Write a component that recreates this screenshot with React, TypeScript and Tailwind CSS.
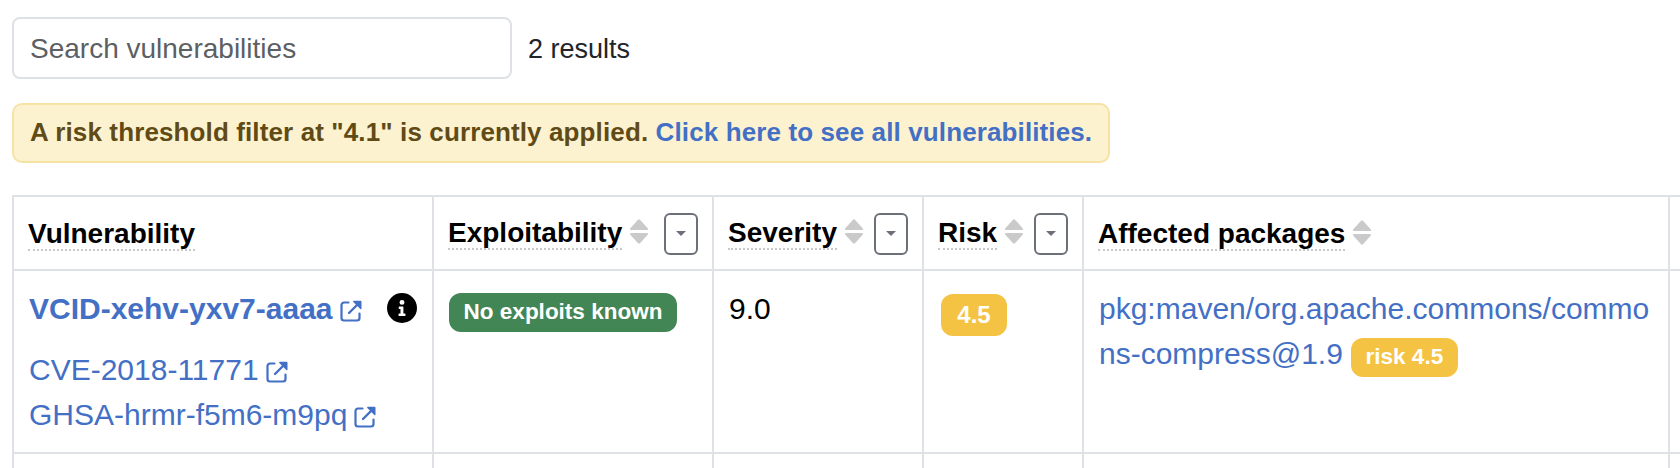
import type { ReactNode } from "react";

function ExternalIcon({ className = "" }: { className?: string }) {
  return (
    <svg viewBox="0 0 22 22" className={`h-[22px] w-[22px] shrink-0 ${className}`} fill="none">
      <path d="M8.5 2.500H4A2.500 2.500 0 0 0 1.500 5v13A2.500 2.500 0 0 0 4 20.500h13a2.500 2.500 0 0 0 2.500-2.500v-4.500" stroke="currentColor" strokeWidth="2.2" strokeLinecap="round" />
      <path d="M9 13 18 4" stroke="currentColor" strokeWidth="2.4" strokeLinecap="round" />
      <path d="M13.800.8h6.700a1 1 0 0 1 1 1v6.700a.7.7 0 0 1-1.200.5L13.300 2a.7.7 0 0 1 .5-1.200z" fill="currentColor" />
    </svg>
  );
}

function SortIcon() {
  return (
    <svg viewBox="0 0 18 25" className="mt-[22px] ml-2 h-[25px] w-[18px] shrink-0" fill="#cacaca">
      <path d="M1 11a1 1 0 0 1-.7-1.700L7.800.9a1.700 1.700 0 0 1 2.400 0l7.500 8.400A1 1 0 0 1 17 11z" />
      <path d="M1 14a1 1 0 0 0-.7 1.700l7.500 8.400a1.700 1.700 0 0 0 2.400 0l7.500-8.400A1 1 0 0 0 17 14z" />
    </svg>
  );
}

function InfoIcon() {
  return (
    <svg viewBox="0 0 512 512" className="mt-[22px] ml-[25px] h-[30px] w-[30px] shrink-0">
      <path d="M256 0a256 256 0 1 0 0 512 256 256 0 0 0 0-512m0 118a42 42 0 1 1 0 84 42 42 0 0 1 0-84m60 262c0 7-5 12-12 12h-96c-7 0-12-5-12-12v-18c0-7 5-12 12-12h22v-76h-18c-7 0-12-5-12-12v-18c0-7 5-12 12-12h56c7 0 12 5 12 12v106h24c7 0 12 5 12 12z" />
    </svg>
  );
}

function FilterButton() {
  return (
    <button className="mt-4 mr-[14px] ml-auto flex h-[42px] w-[34px] shrink-0 items-center justify-center rounded-[6px] border-2 border-[#6c7078]">
      <svg viewBox="0 0 10 5" className="-mt-px h-[5px] w-[10px]">
        <path d="M0 0h10L5 5z" fill="#6c7078" />
      </svg>
    </button>
  );
}

function Heading({ children, low = false, width }: { children: ReactNode; low?: boolean; width: string }) {
  return (
    <span
      className={`block shrink-0 whitespace-nowrap border-b-2 border-dotted border-[#c8c8c8] text-[28px] leading-[34px] font-bold ${low ? "mt-5" : "mt-[19px]"} h-[34px] ${width}`}
    >
      {children}
    </span>
  );
}

const cell = "border-r-2 border-b-2 border-[#dee2e6] pl-[14px]";

export default function App() {
  return (
    <main className="h-[468px] w-[1680px] overflow-hidden bg-white pt-[17px] pl-3 font-['Liberation_Sans',Arial,sans-serif] text-black">
      <div className="flex h-[62px] items-center">
        <input
          className="h-[62px] w-[500px] rounded-[8px] border-2 border-[#dee2e6] px-4 pt-0.5 text-[28px] placeholder:text-[#5c5f63]"
          placeholder="Search vulnerabilities"
        />
        <span className="mt-0.5 ml-4 text-[27px] text-[#212529]">2 results</span>
      </div>
      <div className="mt-6 flex h-[60px] w-[1098px] rounded-[10px] border-2 border-[#f6e3a4] bg-[#fdf2d0] pl-4 text-[26px] leading-[54px] font-bold tracking-[0.12px] whitespace-pre text-[#604b17]">
        A risk threshold filter at "4.1" is currently applied. <a className="text-[#4370c5]">Click here to see all vulnerabilities.</a>
      </div>
      <section className="mt-8 grid h-[290px] w-[1690px] grid-cols-[420px_280px_210px_160px_586px_1fr] grid-rows-[74px_183px_1fr] border-t-2 border-l-2 border-[#dee2e6]">
        <div className={`flex ${cell}`}>
          <Heading low width="w-[167px]">Vulnerability</Heading>
        </div>
        <div className={`flex items-start ${cell}`}>
          <Heading width="w-[174px]">Exploitability</Heading>
          <SortIcon />
          <FilterButton />
        </div>
        <div className={`flex items-start ${cell}`}>
          <Heading width="w-[109px]">Severity</Heading>
          <SortIcon />
          <FilterButton />
        </div>
        <div className={`flex items-start ${cell}`}>
          <Heading width="w-[59px]">Risk</Heading>
          <SortIcon />
          <FilterButton />
        </div>
        <div className={`flex items-start ${cell}`}>
          <Heading low width="w-[247px]">Affected packages</Heading>
          <div className="mt-px"><SortIcon /></div>
        </div>
        <div className={cell} />

        <div className="border-r-2 border-b-2 border-[#dee2e6] pl-[15px] text-[30px] leading-[45px] text-[#4370c5]">
          <div className="flex h-[61px] items-start text-black">
            <a className="mt-[15px] flex items-center font-bold whitespace-nowrap text-[#4370c5]">
              VCID-xehv-yxv7-aaaa
              <ExternalIcon className="mt-1 ml-[7px]" />
            </a>
            <InfoIcon />
          </div>
          <a className="mt-[15px] flex items-center">
            CVE-2018-11771
            <ExternalIcon className="mt-1 ml-[7px]" />
          </a>
          <a className="flex items-center">
            GHSA-hrmr-f5m6-m9pq
            <ExternalIcon className="mt-1 ml-[7px]" />
          </a>
        </div>
        <div className={cell}>
          <span className="mt-[22px] ml-px block h-[39px] w-[228px] rounded-[12px] bg-[#438656] text-center text-[22.5px] leading-[37px] font-bold whitespace-nowrap text-white">
            No exploits known
          </span>
        </div>
        <div className="border-r-2 border-b-2 border-[#dee2e6] pt-[15px] pl-[15px] text-[30px] leading-[45px]">9.0</div>
        <div className={cell}>
          <span className="mt-[23px] ml-[3px] block h-[42px] w-[66px] rounded-[12px] bg-[#f5c344] text-center text-[24px] leading-[41px] font-bold text-white">
            4.5
          </span>
        </div>
        <div className="border-r-2 border-b-2 border-[#dee2e6] pt-[15px] pl-[15px] text-[30px] leading-[45px]">
          <a className="block whitespace-nowrap text-[#4370c5]">pkg:maven/org.apache.commons/commo</a>
          <div className="flex items-start">
            <a className="text-[#4370c5]">ns-compress@1.9</a>
            <span className="mt-[7px] ml-2 h-[39px] w-[107px] rounded-[12px] bg-[#f5c344] text-center text-[22.5px] leading-[37px] font-bold text-white">
              risk 4.5
            </span>
          </div>
        </div>
        <div className={cell} />

        <div className={cell} />
        <div className={cell} />
        <div className={cell} />
        <div className={cell} />
        <div className={cell} />
        <div className={cell} />
      </section>
    </main>
  );
}
